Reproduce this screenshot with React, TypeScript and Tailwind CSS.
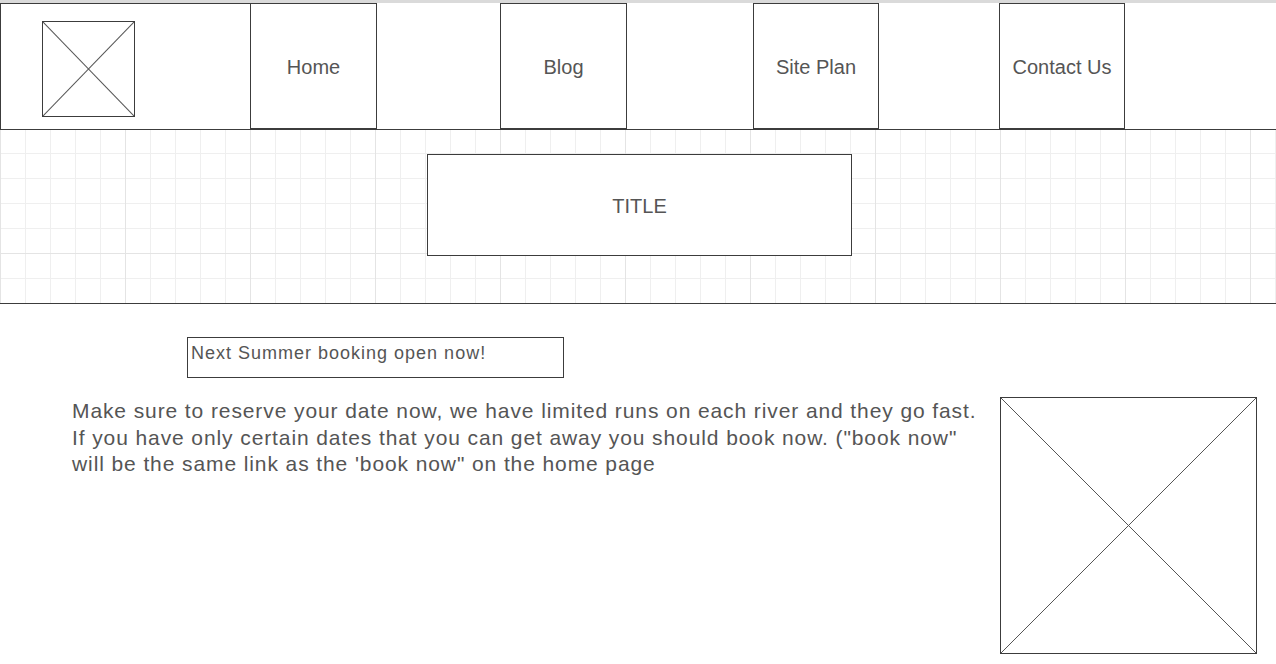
import { ReactElement } from 'react'

const font = { fontFamily: '"Liberation Sans", Arial, sans-serif' }

const CrossBox = ({ className }: { className: string }): ReactElement => (
  <div className={`relative border border-[#3c3c3c] bg-white ${className}`}>
    <svg className="absolute inset-0 w-full h-full" preserveAspectRatio="none" viewBox="0 0 100 100">
      <line x1="0" y1="0" x2="100" y2="100" stroke="#555" strokeWidth="1" vectorEffect="non-scaling-stroke" />
      <line x1="100" y1="0" x2="0" y2="100" stroke="#555" strokeWidth="1" vectorEffect="non-scaling-stroke" />
    </svg>
  </div>
)

const NavCell = ({ label, width }: { label: string; width: string }): ReactElement => (
  <div className={`${width} h-[126px] border border-[#3c3c3c] flex items-center justify-center pt-[2px] text-[20px] text-[#555]`}>
    {label}
  </div>
)

export default function App(): ReactElement {
  return (
    <div className="w-[1276px] min-h-[664px] bg-white text-[#555]" style={font}>
      {/* top strip */}
      <div className="h-[3px] bg-[#dadada]"></div>

      {/* header nav */}
      <div className="h-[127px] border-b border-[#3c3c3c] flex">
        <div className="w-[250px] h-[126px] border-l border-t border-[#3c3c3c] pl-[41px] pt-[17px]">
          <CrossBox className="w-[93px] h-[96px]" />
        </div>
        <NavCell label="Home" width="w-[127px]" />
        <div className="w-[123px]"></div>
        <NavCell label="Blog" width="w-[127px]" />
        <div className="w-[126px]"></div>
        <NavCell label="Site Plan" width="w-[126px]" />
        <div className="w-[120px]"></div>
        <NavCell label="Contact Us" width="w-[126px]" />
      </div>

      {/* grid banner */}
      <div className="h-[174px] border-b border-[#3c3c3c] pt-[24px] [background-image:linear-gradient(to_right,#e4e4e4_1px,transparent_1px),linear-gradient(to_bottom,#e4e4e4_1px,transparent_1px),linear-gradient(to_right,#efefef_1px,transparent_1px),linear-gradient(to_bottom,#efefef_1px,transparent_1px)] [background-size:125px_125px,125px_125px,25px_25px,25px_25px] [background-position:0_-2px]">
        <div className="ml-[427px] w-[425px] h-[102px] border border-[#3c3c3c] bg-white flex items-center justify-center pt-[2px] text-[20px] text-[#555]">
          TITLE
        </div>
      </div>

      {/* booking note */}
      <div className="mt-[33px] ml-[187px] w-[377px] h-[41px] border border-[#3c3c3c] pl-[3px] pt-[5px] text-[18px] leading-[20px] tracking-[1px] text-[#555]">
        Next Summer booking open now!
      </div>

      {/* content row */}
      <div className="mt-[19px] flex justify-between pl-[72px] pr-[19px]">
        <p className="pt-[1px] text-[21px] leading-[26.5px] tracking-[0.9px] text-[#555]">
          Make sure to reserve your date now, we have limited runs on each river and they go fast.
          <br />
          If you have only certain dates that you can get away you should book now. ("book now"
          <br />
          will be the same link as the 'book now" on the home page
        </p>
        <CrossBox className="w-[257px] h-[257px] shrink-0" />
      </div>
    </div>
  )
}
